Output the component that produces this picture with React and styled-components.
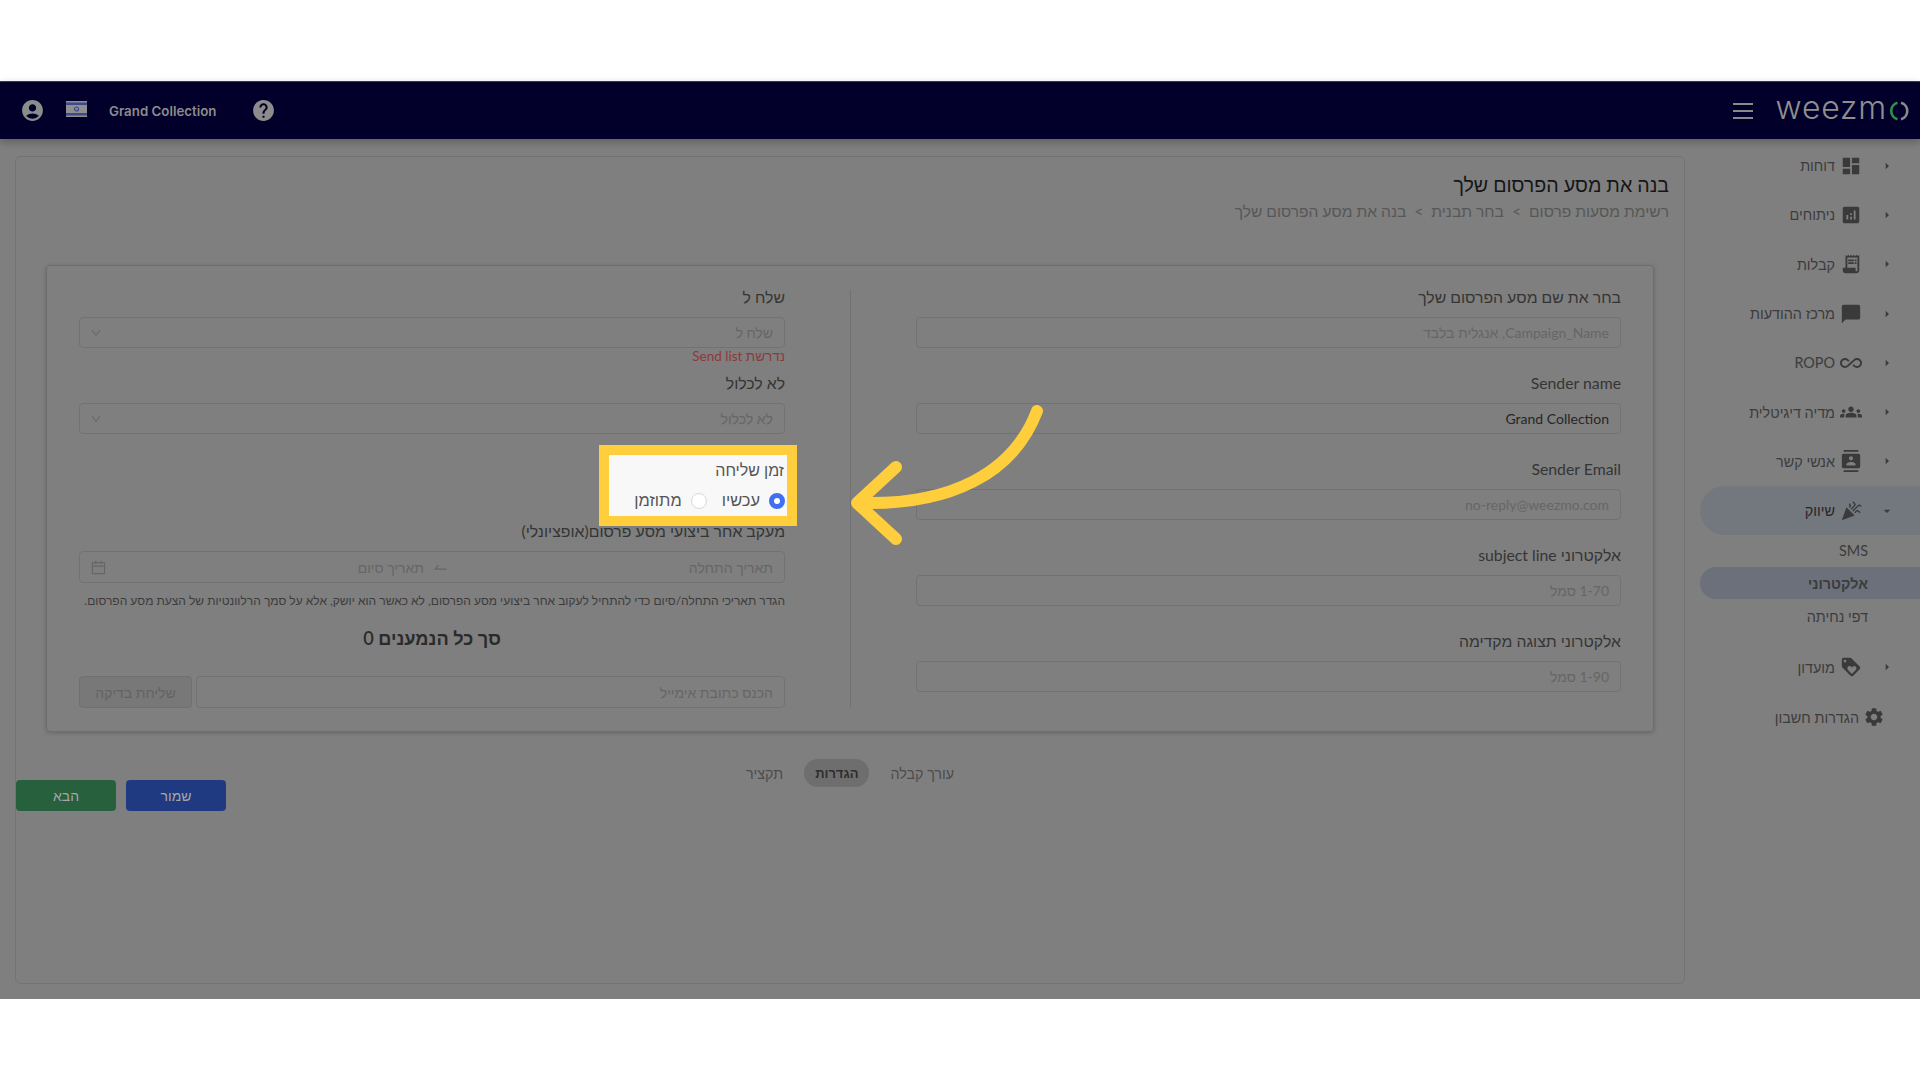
import React from 'react';
import styled, { createGlobalStyle } from 'styled-components';
import {
    MdAccountCircle, MdHelp, MdDashboard, MdAnalytics, MdReceiptLong, MdChatBubble, MdAllInclusive,
    MdGroups, MdContacts, MdCelebration, MdLoyalty, MdSettings, MdArrowRight, MdArrowDropDown
} from 'react-icons/md';
import { AiOutlineDown, AiOutlineCalendar, AiOutlineSwapRight } from 'react-icons/ai';

const menuTop = [
    { label: 'דוחות', Icon: MdDashboard },
    { label: 'ניתוחים', Icon: MdAnalytics },
    { label: 'קבלות', Icon: MdReceiptLong },
    { label: 'מרכז ההודעות', Icon: MdChatBubble },
    { label: 'ROPO', Icon: MdAllInclusive },
    { label: 'מדיה דיגיטלית', Icon: MdGroups },
    { label: 'אנשי קשר', Icon: MdContacts },
];

const subMenu = [
    { label: 'SMS' },
    { label: 'אלקטרוני', active: true },
    { label: 'דפי נחיתה' },
];

const rightFields = [
    { label: 'בחר את שם מסע הפרסום שלך', placeholder: 'Campaign_Name, אנגלית בלבד' },
    { label: 'Sender name', value: 'Grand Collection' },
    { label: 'Sender Email', placeholder: 'no-reply@weezmo.com' },
    { label: 'אלקטרוני subject line', placeholder: '1-70 סמל' },
    { label: 'אלקטרוני תצוגה מקדימה', placeholder: '1-90 סמל' },
];

export default function App() {
    return (
        <>
            <GlobalStyle />
            <Band />
            <Header>
                <Brand>
                    <Logo>
                        <LogoText>weezm</LogoText>
                        <svg width="25" height="20" viewBox="0 0 25 20" fill="none" strokeWidth="2.6">
                            <path d="M10.5 1.8 A8.5 8.5 0 0 0 10.5 18.2" stroke="#2f8f4f" />
                            <path d="M14 1.8 A8.5 8.5 0 0 1 14 18.2" stroke="#8a8a8a" />
                        </svg>
                    </Logo>
                    <Burger><i /><i /><i /></Burger>
                </Brand>
                <Account>
                    <MdHelp />
                    <AccountName>Grand Collection</AccountName>
                    <Flag>
                        <svg width="21" height="16" viewBox="0 0 21 16">
                            <rect width="21" height="16" fill="#8f8f8f" />
                            <rect y="1.5" width="21" height="2.5" fill="#3c4a8c" />
                            <rect y="12" width="21" height="2.5" fill="#3c4a8c" />
                            <circle cx="10.5" cy="8" r="2" fill="none" stroke="#3c4a8c" strokeWidth="1.2" />
                        </svg>
                    </Flag>
                    <MdAccountCircle />
                </Account>
            </Header>
            <Screen>
                <Sidebar>
                    {menuTop.map(({ label, Icon }) => (
                        <MenuRow key={label}>
                            <Caret><MdArrowRight /></Caret>
                            <MenuIcon><Icon /></MenuIcon>
                            <span>{label}</span>
                        </MenuRow>
                    ))}
                    <MenuRow $open>
                        <Caret><MdArrowDropDown /></Caret>
                        <MenuIcon><MdCelebration /></MenuIcon>
                        <span>שיווק</span>
                    </MenuRow>
                    {subMenu.map(item => (
                        <SubRow key={item.label} $active={item.active}>{item.label}</SubRow>
                    ))}
                    <MenuRow $spaced>
                        <Caret><MdArrowRight /></Caret>
                        <MenuIcon><MdLoyalty /></MenuIcon>
                        <span>מועדון</span>
                    </MenuRow>
                    <SettingsRow>
                        <MenuIcon><MdSettings /></MenuIcon>
                        <span>הגדרות חשבון</span>
                    </SettingsRow>
                </Sidebar>
                <Panel>
                    <Title>בנה את מסע הפרסום שלך</Title>
                    <Crumbs>
                        <span>רשימת מסעות פרסום</span>
                        <span>&gt;</span>
                        <span>בחר תבנית</span>
                        <span>&gt;</span>
                        <span>בנה את מסע הפרסום שלך</span>
                    </Crumbs>
                    <Card>
                        <Column>
                            {rightFields.map(f => (
                                <Field key={f.label}>
                                    <Label>{f.label}</Label>
                                    <InputBox $filled={!!f.value}>{f.value || f.placeholder}</InputBox>
                                </Field>
                            ))}
                        </Column>
                        <Divider />
                        <Column>
                            <Label>שלח ל</Label>
                            <InputBox>
                                <span>שלח ל</span>
                                <AiOutlineDown />
                            </InputBox>
                            <ErrorText>נדרשת Send list</ErrorText>
                            <Label>לא לכלול</Label>
                            <InputBox>
                                <span>לא לכלול</span>
                                <AiOutlineDown />
                            </InputBox>
                            <SendTime>
                                <TimeLabel>זמן שליחה</TimeLabel>
                                <Radios>
                                    <RadioOption>
                                        <RadioDot $checked />
                                        <span>עכשיו</span>
                                    </RadioOption>
                                    <RadioOption>
                                        <RadioDot />
                                        <span>מתוזמן</span>
                                    </RadioOption>
                                </Radios>
                            </SendTime>
                            <Label>מעקב אחר ביצועי מסע פרסום(אופציונלי)</Label>
                            <DateBox>
                                <DatePart>תאריך התחלה</DatePart>
                                <DateArrow><AiOutlineSwapRight /></DateArrow>
                                <DatePart>תאריך סיום</DatePart>
                                <AiOutlineCalendar />
                            </DateBox>
                            <Helper>הגדר תאריכי התחלה/סיום כדי להתחיל לעקוב אחר ביצועי מסע הפרסום, לא כאשר הוא יושק, אלא על סמך הרלוונטיות של הצעת מסע הפרסום.</Helper>
                            <Total>סך כל הנמענים 0</Total>
                            <TestRow>
                                <TestInput>הכנס כתובת אימייל</TestInput>
                                <TestButton>שליחת בדיקה</TestButton>
                            </TestRow>
                        </Column>
                    </Card>
                    <Footer>
                        <span />
                        <Tabs>
                            <Tab>עורך קבלה</Tab>
                            <Tab $active>הגדרות</Tab>
                            <Tab>תקציר</Tab>
                        </Tabs>
                        <Actions>
                            <ActionButton $color="#1f3a80">שמור</ActionButton>
                            <ActionButton $color="#27603d">הבא</ActionButton>
                        </Actions>
                    </Footer>
                </Panel>
                <Pointer width="210" height="150" viewBox="0 0 210 150" fill="none" stroke="#ffce3d" strokeWidth="12" strokeLinecap="round" strokeLinejoin="round">
                    <path d="M194 6 C170 70 105 100 19 98" />
                    <path d="M53 62 L14 98 L53 134" />
                </Pointer>
            </Screen>
            <Band />
        </>
    );
}

const GlobalStyle = createGlobalStyle`
    html, body{
        margin: 0;
        padding: 0;
        background: #FFF;
    }
    body{
        font-family: 'Lato', 'Liberation Sans', sans-serif;
        direction: rtl;
        overflow: hidden;
    }
    *{
        box-sizing: border-box;
    }
`;

const Band = styled.div`
    height: 81px;
    background: #FFF;
`;

const Header = styled.header`
    position: relative;
    z-index: 2;
    height: 58px;
    background: #02002a;
    border-top: 1px solid #3a3860;
    display: flex;
    justify-content: space-between;
    align-items: center;
    box-shadow: 0 3px 8px rgba(0,0,0,0.25);
`;

const Brand = styled.div`
    display: flex;
    align-items: center;
    gap: 23px;
    padding-right: 8px;
`;

const Logo = styled.div`
    display: flex;
    align-items: center;
    direction: ltr;
`;

const LogoText = styled.span`
    font-family: 'Inter', sans-serif;
    font-weight: 300;
    font-size: 32px;
    letter-spacing: 0.8px;
    line-height: 36px;
    color: #8f8f8f;
    position: relative;
    top: -3px;
`;

const Burger = styled.div`
    width: 20px;
    display: flex;
    flex-direction: column;
    gap: 5px;
    i{
        display: block;
        height: 2px;
        background: #8a8a8a;
    }
`;

const Account = styled.div`
    display: flex;
    align-items: center;
    color: #8c8c8c;
    padding-left: 20px;
    svg{
        font-size: 25px;
    }
`;

const AccountName = styled.span`
    direction: ltr;
    font-family: 'Inter', sans-serif;
    font-size: 13.3px;
    font-weight: 600;
    width: 107px;
    margin: 0 35px 0 22px;
    white-space: nowrap;
`;

const Flag = styled.div`
    display: flex;
    margin: -3px 0 0 21px;
`;

const Screen = styled.div`
    position: relative;
    height: 860px;
    background: #7f7f7f;
    display: flex;
`;

const Sidebar = styled.nav`
    width: 235px;
    flex-shrink: 0;
    padding-top: 2px;
    color: #3c3c3c;
    font-size: 14.4px;
`;

const MenuRow = styled.div`
    height: 49.3px;
    display: flex;
    align-items: center;
    padding-right: 25px;
    margin-left: 15px;
    margin-top: ${p => p.$spaced ? '10px' : '0'};
    margin-bottom: ${p => p.$open ? '-1px' : '0'};
    background: ${p => p.$open ? '#73777e' : 'transparent'};
    color: ${p => p.$open ? '#262626' : 'inherit'};
    border-top-left-radius: ${p => p.$open ? '25px' : '0'};
    border-bottom-left-radius: ${p => p.$open ? '25px' : '0'};
`;

const SettingsRow = styled.div`
    height: 49.3px;
    margin-top: 1px;
    display: flex;
    align-items: center;
    padding-right: 35px;
    span:last-child{
        margin-right: -1px;
    }
`;

const Caret = styled.span`
    width: 16px;
    margin-left: 17px;
    display: flex;
    justify-content: center;
    color: #3c3c3c;
    svg{
        font-size: 18px;
    }
`;

const MenuIcon = styled.span`
    width: 22px;
    margin-left: 5px;
    display: flex;
    justify-content: center;
    color: #3a3a3a;
    svg{
        font-size: 22px;
    }
`;

const SubRow = styled.div`
    height: 32px;
    margin: 0 0 1px 15px;
    padding-right: 52px;
    display: flex;
    align-items: center;
    background: ${p => p.$active ? '#6b707a' : 'transparent'};
    border-top-left-radius: ${p => p.$active ? '16px' : '0'};
    border-bottom-left-radius: ${p => p.$active ? '16px' : '0'};
    font-weight: ${p => p.$active ? '600' : '400'};
`;

const Panel = styled.main`
    width: 1670px;
    height: 828px;
    margin-top: 17px;
    border: 1px solid #737373;
    border-radius: 6px;
    padding-top: 14px;
`;

const Title = styled.h1`
    margin: 0;
    padding-right: 15px;
    font-size: 19.6px;
    font-weight: 400;
    line-height: 28px;
    color: #161616;
`;

const Crumbs = styled.div`
    display: flex;
    gap: 8px;
    padding-right: 15px;
    height: 20px;
    margin-top: 2px;
    align-items: center;
    font-size: 15.6px;
    color: #575757;
`;

const Card = styled.section`
    margin: 44px 30px 0;
    height: 467px;
    padding: 21px 32px 0;
    border: 1px solid #6e6e6e;
    border-radius: 4px;
    box-shadow: 0 1px 4px rgba(0,0,0,0.2);
    display: grid;
    grid-template-columns: 705px 1px 706px;
    column-gap: 65px;
`;

const Column = styled.div`
    display: flex;
    flex-direction: column;
`;

const Divider = styled.div`
    width: 1px;
    height: 418px;
    margin-top: 3px;
    background: #727272;
`;

const Field = styled.div`
    margin-bottom: 25px;
`;

const Label = styled.div`
    font-size: 15.8px;
    line-height: 20px;
    margin-bottom: 10px;
    color: #353535;
    white-space: nowrap;
`;

const InputBox = styled.div`
    height: 31px;
    border: 1px solid #727272;
    border-radius: 4px;
    padding: 0 11px;
    display: flex;
    align-items: center;
    justify-content: space-between;
    font-size: 14px;
    color: ${p => p.$filled ? '#262626' : '#666666'};
    svg{
        font-size: 12px;
        color: #666666;
        margin-left: -1px;
    }
`;

const ErrorText = styled.div`
    font-size: 13.5px;
    line-height: 16px;
    margin-bottom: 9px;
    color: #8c3a3a;
`;

const SendTime = styled.div`
    align-self: flex-start;
    width: 178px;
    height: 61px;
    margin: 21px -2px 5px 0;
    padding: 5px 3px 0 0;
    background: #f8f8f8;
    box-shadow: 0 0 0 10px #ffce3d;
    position: relative;
    z-index: 1;
`;

const TimeLabel = styled.div`
    font-size: 16px;
    line-height: 20px;
    color: #555555;
`;

const Radios = styled.div`
    display: flex;
    gap: 15px;
    margin-top: 10px;
    margin-right: -1px;
`;

const RadioOption = styled.label`
    display: flex;
    align-items: center;
    gap: 9px;
    font-size: 16.4px;
    line-height: 20px;
    color: #555555;
`;

const RadioDot = styled.span`
    width: 16px;
    height: 16px;
    margin-top: 2px;
    border-radius: 50%;
    background: #FFF;
    border: ${p => p.$checked ? '5px solid #3f6ff2' : '1px solid #d9d9d9'};
`;

const DateBox = styled(InputBox)`
    height: 32px;
    svg{
        font-size: 17px;
    }
`;

const DatePart = styled.span`
    width: 317px;
`;

const DateArrow = styled.span`
    display: flex;
    width: 32px;
    justify-content: center;
    transform: scaleX(-1);
`;

const Helper = styled.div`
    margin-top: 9px;
    height: 18px;
    font-size: 12px;
    line-height: 18px;
    color: #3c3c3c;
    white-space: nowrap;
`;

const Total = styled.div`
    margin-top: 15px;
    text-align: center;
    font-size: 18.2px;
    line-height: 26px;
    font-weight: 600;
    color: #2b2b2b;
`;

const TestRow = styled.div`
    display: flex;
    gap: 4px;
    margin-top: 25px;
`;

const TestInput = styled(InputBox)`
    flex: 1;
    height: 32px;
`;

const TestButton = styled.button`
    width: 113px;
    height: 32px;
    padding: 0;
    font-family: inherit;
    font-size: 14px;
    color: #636363;
    background: #787878;
    border: 1px solid #707070;
    border-radius: 4px;
`;

const Footer = styled.div`
    display: grid;
    grid-template-columns: 1fr auto 1fr;
    margin-top: 27px;
`;

const Tabs = styled.div`
    display: flex;
    align-items: center;
    height: 28px;
    gap: 21px;
`;

const Tab = styled.div`
    height: 28px;
    padding: 0 ${p => p.$active ? '11px' : '0'};
    display: flex;
    align-items: center;
    border-radius: 14px;
    font-size: ${p => p.$active ? '13px' : '14.3px'};
    font-weight: ${p => p.$active ? '600' : '400'};
    color: ${p => p.$active ? '#2e2e2e' : '#4c4c4c'};
    background: ${p => p.$active ? '#6e6e6e' : 'transparent'};
`;

const Actions = styled.div`
    justify-self: end;
    display: flex;
    gap: 10px;
    margin-top: 21px;
`;

const ActionButton = styled.button`
    width: 100px;
    height: 31px;
    padding: 0;
    font-family: inherit;
    font-size: 14px;
    color: #a6a6a6;
    background: ${p => p.$color};
    border: none;
    border-radius: 4px;
`;

const Pointer = styled.svg`
    position: absolute;
    left: 843px;
    top: 266px;
    z-index: 3;
`;
